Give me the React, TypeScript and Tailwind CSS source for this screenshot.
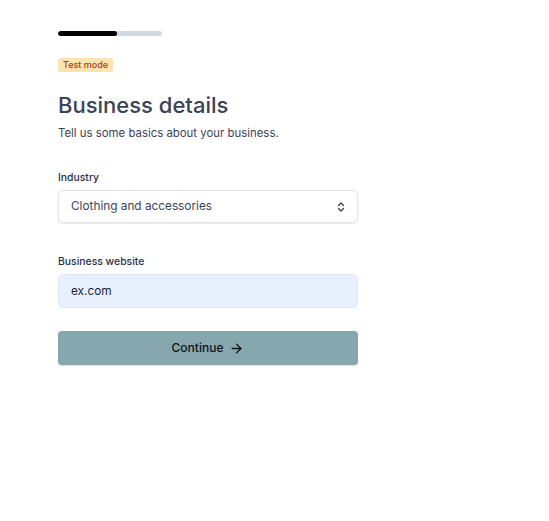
import * as React from "react";
import { ArrowRight } from "lucide-react";

function ChevronUpDown() {
  return (
    <svg width="12" height="12" viewBox="0 0 12 12" fill="none" className="text-[#3c4257]">
      <path d="M3.5 4.5L6 2L8.5 4.5" stroke="currentColor" strokeWidth="1.4" strokeLinecap="round" strokeLinejoin="round" />
      <path d="M3.5 7.5L6 10L8.5 7.5" stroke="currentColor" strokeWidth="1.4" strokeLinecap="round" strokeLinejoin="round" />
    </svg>
  );
}

export default function App() {
  return (
    <div className="min-h-[521px] bg-white font-['Inter',sans-serif]">
      <div className="flex w-[358px] flex-col pl-[58px] pt-[31px]">
        {/* Progress */}
        <div className="flex h-[5px] w-[104px] overflow-hidden rounded-full bg-[#d1d9e0]">
          <div className="h-full w-[59px] rounded-full bg-black" />
        </div>

        {/* Badge */}
        <span className="mt-[22px] inline-flex w-fit items-center rounded-[3px] bg-[#fde3b0] px-[5px] py-[1px] text-[9px] font-medium leading-[12px] text-[#a23f0f]">
          Test mode
        </span>

        <h1 className="mt-[19px] text-[22px] font-medium leading-[28px] text-[#3c4257]">
          Business details
        </h1>
        <p className="mt-[6px] text-[11.4px] leading-[16px] text-[#3c4257]">
          Tell us some basics about your business.
        </p>

        {/* Industry */}
        <label className="mt-[30px] text-[10.4px] font-medium leading-[14px] text-[#2a2f45]">
          Industry
        </label>
        <button className="mt-[5px] flex h-[33px] w-full items-center justify-between rounded-[5px] border border-[#e0e3e8] bg-white pl-[12px] pr-[10px] pt-[1px] text-left text-[11.8px] text-[#3c4257] shadow-[0_1px_1px_rgba(0,0,0,0.08)]">
          <span>Clothing and accessories</span>
          <ChevronUpDown />
        </button>

        {/* Website */}
        <label className="mt-[32px] text-[10.4px] font-medium leading-[14px] text-[#2a2f45]">
          Business website
        </label>
        <input
          defaultValue="ex.com"
          className="mt-[5px] h-[34px] w-full rounded-[5px] border border-[#e3e8ee] bg-[#e8f0fe] px-[12px] text-[11.8px] text-[#1a1f36] outline-none"
        />

        {/* Continue */}
        <button className="mt-[23px] flex h-[34px] w-full items-center justify-center gap-[6px] rounded-[4px] bg-[#87a7ae] text-[12px] font-medium text-[#111418] shadow-[0_1px_1px_rgba(0,0,0,0.12)]">
          Continue
          <ArrowRight className="h-[15px] w-[15px]" strokeWidth={2.2} />
        </button>
      </div>
    </div>
  );
}
